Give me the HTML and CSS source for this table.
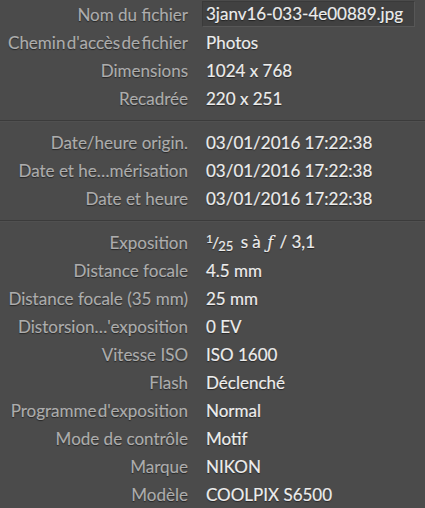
FILE: index.html
```html
<!DOCTYPE html>
<html lang="fr">
<head>
<meta charset="utf-8">
<title>Métadonnées</title>
<link rel="stylesheet" href="styles.css">
</head>
<body>
<div class="panel">
  <section class="group first">
    <div class="row"><span class="label">Nom du fichier</span><span class="value"><span class="field">3janv16-033-4e00889.jpg</span></span></div>
    <div class="row"><span class="label tight">Chemin d'accès de fichier</span><span class="value">Photos</span></div>
    <div class="row"><span class="label">Dimensions</span><span class="value">1024 x 768</span></div>
    <div class="row"><span class="label">Recadrée</span><span class="value">220 x 251</span></div>
  </section>
  <div class="sep"></div>
  <section class="group">
    <div class="row"><span class="label">Date/heure origin.</span><span class="value">03/01/2016 17:22:38</span></div>
    <div class="row"><span class="label">Date et he…mérisation</span><span class="value">03/01/2016 17:22:38</span></div>
    <div class="row"><span class="label">Date et heure</span><span class="value">03/01/2016 17:22:38</span></div>
  </section>
  <div class="sep"></div>
  <section class="group">
    <div class="row"><span class="label">Exposition</span><span class="value"><span class="num">1</span><span class="slash">/</span><span class="den">25</span> s à <i class="f">ƒ</i> / 3,1</span></div>
    <div class="row"><span class="label">Distance focale</span><span class="value">4.5 mm</span></div>
    <div class="row"><span class="label">Distance focale (35 mm)</span><span class="value">25 mm</span></div>
    <div class="row"><span class="label">Distorsion…'exposition</span><span class="value">0 EV</span></div>
    <div class="row"><span class="label">Vitesse ISO</span><span class="value">ISO 1600</span></div>
    <div class="row"><span class="label">Flash</span><span class="value">Déclenché</span></div>
    <div class="row"><span class="label tight">Programme d'exposition</span><span class="value">Normal</span></div>
    <div class="row"><span class="label">Mode de contrôle</span><span class="value">Motif</span></div>
    <div class="row"><span class="label">Marque</span><span class="value">NIKON</span></div>
    <div class="row"><span class="label">Modèle</span><span class="value">COOLPIX S6500</span></div>
  </section>
</div>
</body>
</html>
```
FILE: styles.css
```css
html, body {
  margin: 0;
  padding: 0;
  background: #4b4b4b;
}
body {
  width: 425px;
  height: 508px;
  overflow: hidden;
  font-family: Lato, "Open Sans", sans-serif;
  font-size: 17px;
}
.panel {
  display: flex;
  flex-direction: column;
}
.group {
  display: flex;
  flex-direction: column;
  padding: 7px 0;
}
.group.first {
  padding-top: 1px;
}
.sep {
  height: 1px;
  background: #3b3b3b;
  border-bottom: 1px solid #505050;
}
.row {
  display: grid;
  grid-template-columns: 188px 1fr;
  column-gap: 18px;
  height: 28px;
  padding-bottom: 2px;
  box-sizing: border-box;
  align-items: center;
  text-shadow: 0 1px 1px rgba(0, 0, 0, 0.5);
}
.label {
  text-align: right;
  color: #adadad;
  white-space: nowrap;
  -webkit-text-stroke: 0.15px #adadad;
}
.label.tight {
  word-spacing: -3px;
}
.value {
  color: #ededed;
  white-space: nowrap;
  -webkit-text-stroke: 0.18px #ededed;
}
.field {
  display: block;
  margin-left: -4px;
  width: 208px;
  height: 24px;
  line-height: 24px;
  padding-left: 3px;
  background: #414141;
  border-top: 1px solid #3a3a3a;
  border-left: 1px solid #3a3a3a;
  border-bottom: 1px solid #575757;
  border-right: 1px solid #575757;
  box-sizing: content-box;
}
.num {
  font-size: 12px;
  vertical-align: 5px;
}
.slash {
  font-size: 16px;
  margin: 0 -1px;
}
.den {
  font-size: 13px;
  vertical-align: -3px;
  margin-right: 3px;
}
.f {
  font-family: "DejaVu Serif", serif;
  font-style: italic;
  font-size: 16px;
  margin: 0 2px;
}
```
